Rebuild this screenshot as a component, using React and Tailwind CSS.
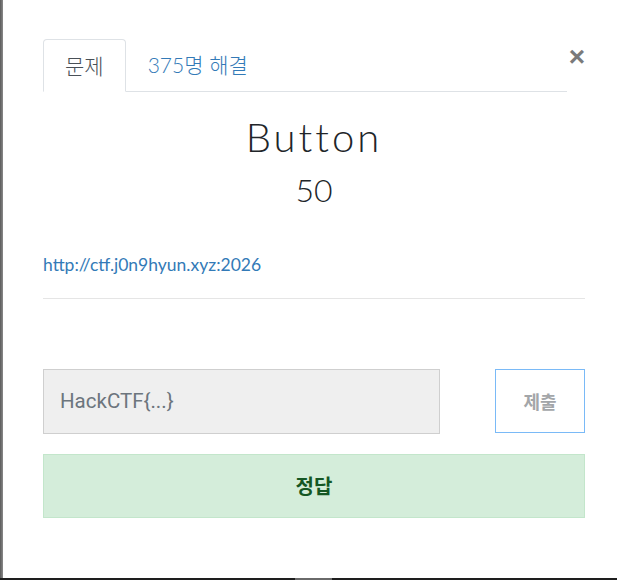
import React from 'react';

const CTF_URL = 'http://ctf.j0n9hyun.xyz:2026';

const ChallengeModal = () => {
  return (
    <div className="relative flex-1 bg-white">
      <div className="ml-[40px] w-[542px] pt-[39px]">
        {/* tabs + close */}
        <div className="flex items-start">
          <div className="flex h-[53px] w-[525px] items-end border-b border-[#dee2e6] [font-family:'Lato','Noto_Sans_CJK_KR',sans-serif]">
            <div className="-mb-px flex h-[53px] items-center rounded-t-[4px] border border-b-white border-[#dee2e6] bg-white px-[21px] text-[21px] font-light text-[#495057]">
              문제
            </div>
            <div className="flex h-[52px] items-center px-[22px] text-[21px] font-light text-[#337ab7]">
              375명 해결
            </div>
          </div>
          <button className="ml-[2px] mt-[4px] text-[28px] leading-none font-bold text-[#7a7a7a] [font-family:'Liberation_Sans',sans-serif]">
            ×
          </button>
        </div>

        {/* title */}
        <div className="text-center text-[#212529] [font-family:'Lato',sans-serif]">
          <h3 className="mt-[21px] text-[40px] leading-[48px] font-light tracking-[3px]">Button</h3>
          <p className="mt-[10px] text-[32px] leading-[38px] font-light">50</p>
        </div>

        {/* description */}
        <div className="mt-[44px] text-[17.5px] leading-[24px] [font-family:'Lato',sans-serif]">
          <a className="text-[#337ab7]">{CTF_URL}</a>
        </div>
        <hr className="mt-[21px] border-t border-[#e5e5e5]" />

        {/* submission */}
        <div className="mt-[70px] flex items-start justify-between">
          <div className="flex h-[65px] w-[397px] items-center border border-[#cfcfcf] bg-[#efefef] px-[16px] text-[20.5px] text-[#6c757d] [font-family:'Roboto',sans-serif]">
            HackCTF{'{...}'}
          </div>
          <button className="h-[64px] w-[90px] border border-[#7abaf7] bg-white text-[18px] font-bold text-[#a3a6a9] [font-family:'Noto_Sans_CJK_KR',sans-serif]">
            제출
          </button>
        </div>

        <div className="mt-[20px] flex h-[64px] items-center justify-center border border-[#c3e6cb] bg-[#d4edda] text-[20px] font-bold text-[#155724] [font-family:'Noto_Sans_CJK_KR',sans-serif]">
          정답
        </div>
      </div>
    </div>
  );
};

export default function App() {
  return (
    <div className="flex h-[580px] w-[617px] flex-col overflow-hidden">
      <div className="flex flex-1">
        <div className="w-[3px] bg-[linear-gradient(90deg,#5a5a5a,#8a8a8a)]" />
        <ChallengeModal />
      </div>
      <div className="flex h-[2px] bg-[#1e1e1e]">
        <div className="ml-[295px] w-[37px] bg-[#6a6a6a]" />
      </div>
    </div>
  );
}
